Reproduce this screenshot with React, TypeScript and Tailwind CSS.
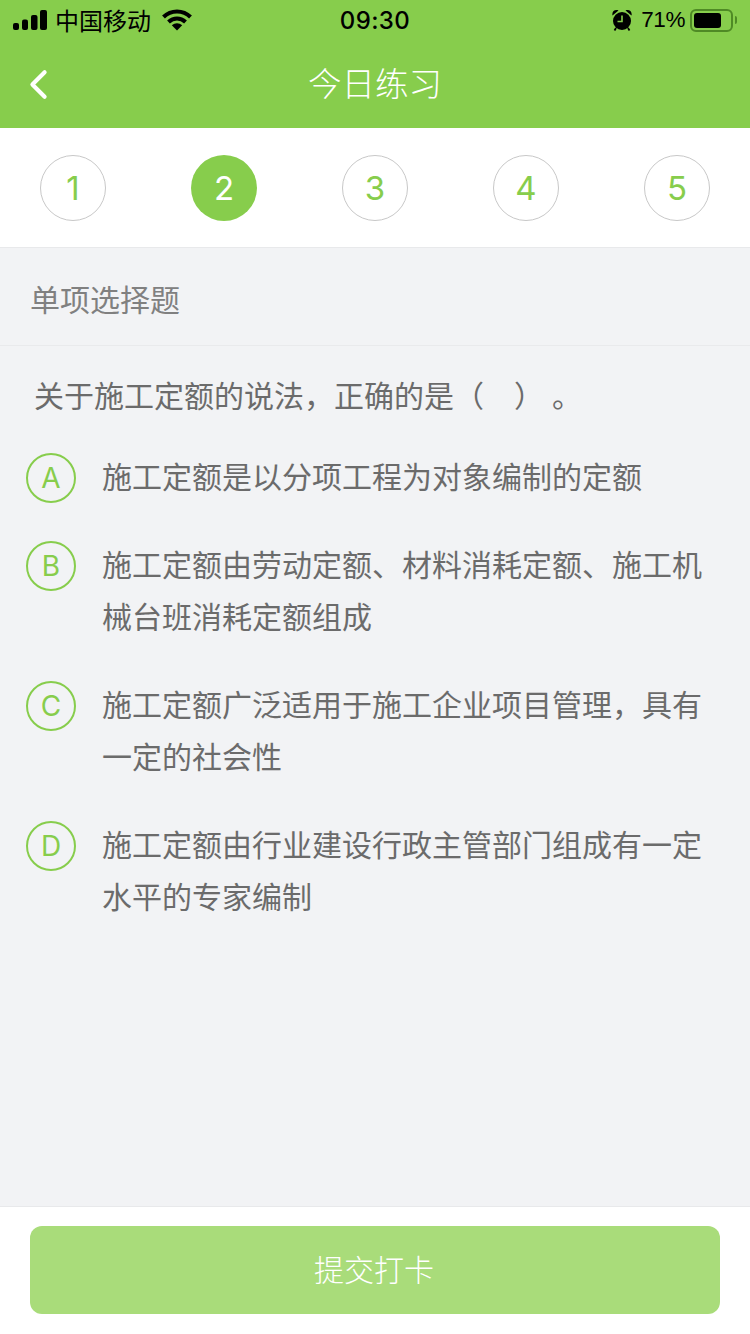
import React from "react";
import { ChevronLeft } from "lucide-react";

const cjk = { fontFamily: '"Noto Sans CJK SC", sans-serif' };
const latin = { fontFamily: 'Inter, "Liberation Sans", sans-serif' };

const steps = [1, 2, 3, 4, 5];
const activeStep = 2;

const options = [
  { key: "A", text: "施工定额是以分项工程为对象编制的定额" },
  { key: "B", text: "施工定额由劳动定额、材料消耗定额、施工机械台班消耗定额组成" },
  { key: "C", text: "施工定额广泛适用于施工企业项目管理\uFF0C具有一定的社会性" },
  { key: "D", text: "施工定额由行业建设行政主管部门组成有一定水平的专家编制" },
];

function StatusBar() {
  return (
    <div className="flex h-10 items-center justify-between pl-[13px] pr-[13px] text-black">
      <div className="flex w-[220px] items-center">
        <svg width="34" height="20" viewBox="0 0 34 20" fill="#000">
          <rect x="0" y="13" width="6" height="7" rx="2" />
          <rect x="9" y="9.5" width="6" height="10.5" rx="2" />
          <rect x="18" y="5" width="6.5" height="15" rx="2" />
          <rect x="27" y="0" width="7" height="20" rx="2" />
        </svg>
        <span className="ml-[8px] text-[24px] leading-none" style={cjk}>中国移动</span>
        <svg className="ml-[11px]" width="30" height="22" viewBox="0 0 30 22" fill="none" stroke="#000" strokeWidth="4">
          <path d="M1.5 8C9 0.5 21 0.5 28.5 8" />
          <path d="M6.5 13C11.5 8.2 18.5 8.2 23.5 13" />
          <path d="M9.8 16.2 15 21.5 20.2 16.2C17 13.5 13 13.5 9.8 16.2Z" fill="#000" stroke="none" />
        </svg>
      </div>
      <span className="translate-y-[1px] text-[24px] font-medium leading-none tracking-[0.4px]" style={latin}>09:30</span>
      <div className="flex w-[220px] items-center justify-end">
        <svg width="20" height="22" viewBox="0 0 20 22">
          <circle cx="10" cy="12" r="9" fill="#000" />
          <path d="M10 6.5V12.5H5.5" fill="none" stroke="#87cd4c" strokeWidth="1.6" />
          <path d="M0.5 6.5C-0.5 2.5 3 0 6.5 1.5ZM19.5 6.5C20.5 2.5 17 0 13.5 1.5Z" fill="#000" />
          <path d="M4 19 2.5 21.5M16 19 17.5 21.5" stroke="#000" strokeWidth="1.8" />
        </svg>
        <span className="ml-[9px] text-[22.5px] leading-none tracking-[-0.4px]" style={{ fontFamily: '"Liberation Sans", sans-serif' }}>71%</span>
        <div className="ml-[5px] flex h-[23px] w-[43px] items-center rounded-[6px] border-2 border-[#4f8a25] p-[2px]">
          <div className="h-full w-[27px] rounded-[3px] bg-black" />
        </div>
        <div className="ml-[2px] h-[8px] w-[2px] rounded-r bg-[#4f8a25]" />
      </div>
    </div>
  );
}

function Option({ optionKey, text }: { optionKey: string; text: string }) {
  return (
    <div className="flex items-start">
      <div
        className="mt-[2px] flex h-[50px] w-[50px] shrink-0 items-center justify-center rounded-full border-2 border-[#87cd4c] text-[28px] font-normal leading-none text-[#87cd4c]"
        style={latin}
      >
        {optionKey}
      </div>
      <p className="ml-[26px] w-[600px] -translate-y-[2px] text-[30px] leading-[52px] text-[#6b6b6b]">{text}</p>
    </div>
  );
}

export default function App() {
  return (
    <div className="flex min-h-[1334px] flex-col bg-[#f2f3f5]" style={cjk}>
      <header className="h-32 bg-[#87cd4c]">
        <StatusBar />
        <div className="relative flex h-[88px] items-center justify-center">
          <ChevronLeft className="absolute left-[14px] top-[20px] h-[49px] w-[49px] text-white" strokeWidth={2} />
          <h1 className="-translate-y-[2px] text-[33.5px] font-light leading-none text-white">今日练习</h1>
        </div>
      </header>

      <div className="flex h-[120px] items-start justify-between border-b border-[#e8e9eb] bg-white px-10 pt-[27px]">
        {steps.map((step) =>
          step === activeStep ? (
            <div
              key={step}
              className="flex h-[66px] w-[66px] items-center justify-center rounded-full bg-[#87cd4c] text-[33px] font-normal leading-none text-white"
              style={latin}
            >
              {step}
            </div>
          ) : (
            <div
              key={step}
              className="flex h-[66px] w-[66px] items-center justify-center rounded-full border border-[#c8c8c8] text-[33px] font-normal leading-none text-[#87cd4c]"
              style={latin}
            >
              {step}
            </div>
          )
        )}
      </div>

      <main className="flex-1">
        <div className="flex h-[98px] items-center border-b border-[#e9eaec] pl-[30px] pt-[3px] text-[30px] leading-none text-[#808080]">
          单项选择题
        </div>
        <p className="pl-[34px] pt-[22px] pb-[2px] text-[30px] leading-[52px] text-[#6b6b6b]">
          {"关于施工定额的说法\uFF0C正确的是\uFF08"}
          <span className="inline-block w-[30px]" />
          {"\uFF09"}
          <span className="inline-block w-2" />
          {"。"}
        </p>
        <div className="mt-[29px] flex flex-col gap-9 pl-[26px]">
          {options.map((o) => (
            <Option key={o.key} optionKey={o.key} text={o.text} />
          ))}
        </div>
      </main>

      <footer className="h-32 border-t border-[#e8e9eb] bg-white px-[30px] pt-[19px]">
        <button className="flex h-[88px] w-full items-center justify-center rounded-[12px] bg-[#a9dc7a] pb-1 pr-[2px] text-[30px] font-light text-white">
          提交打卡
        </button>
      </footer>
    </div>
  );
}
